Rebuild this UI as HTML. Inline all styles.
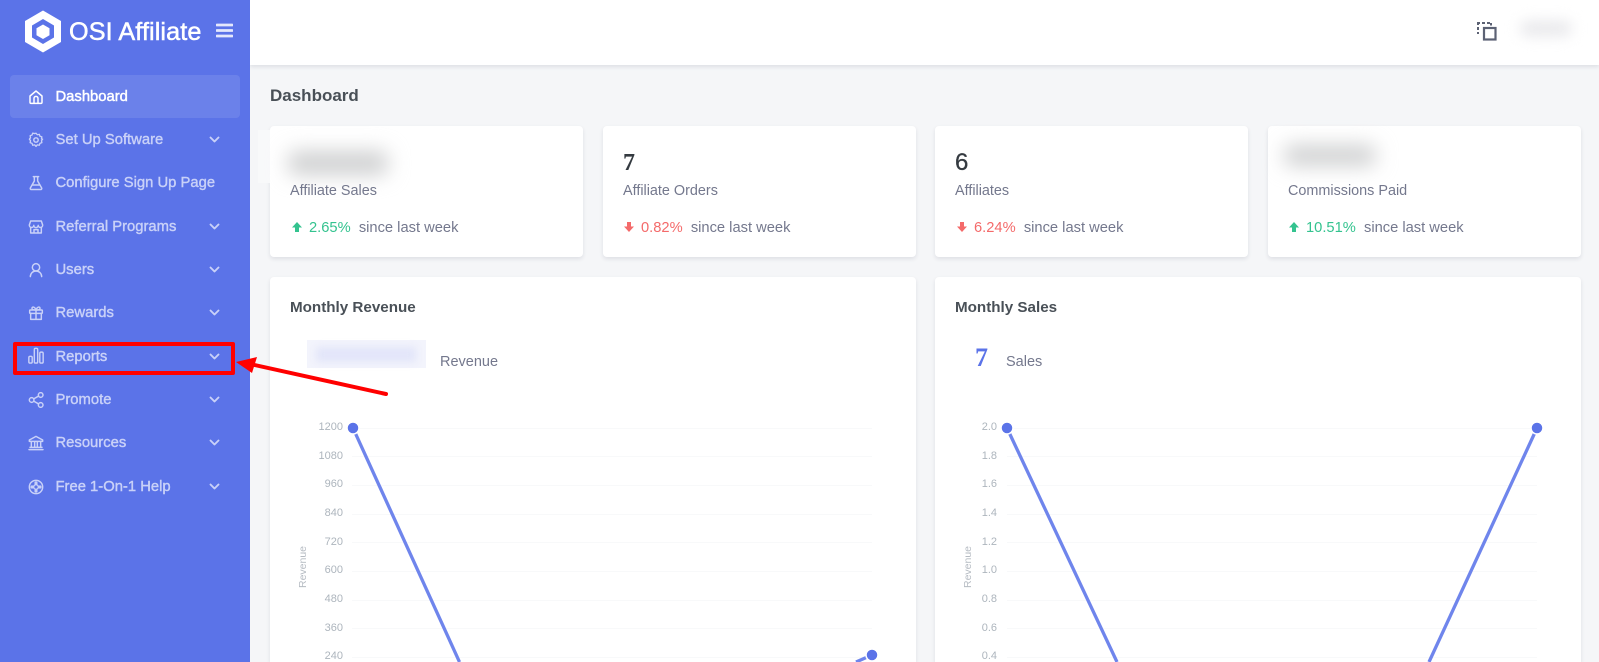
<!DOCTYPE html>
<html lang="en"><head><meta charset="utf-8"><title>OSI Affiliate Dashboard</title>
<style>
*{box-sizing:border-box}
html,body{margin:0;padding:0;width:1599px;height:662px;overflow:hidden;background:#f5f6f8;font-family:"Liberation Sans",sans-serif}
#wrap{position:relative;width:1599px;height:662px;overflow:hidden;background:#f5f6f8}
.a{position:absolute}
#side{left:0;top:0;width:250px;height:662px;background:#5b73e8}
#top{left:250px;top:0;width:1349px;height:65px;background:#fff;box-shadow:0 2px 4px rgba(15,34,58,.1)}
.logo{left:69px;top:18px;font-size:25.2px;line-height:29px;color:#fff;-webkit-text-stroke:.5px #fff;white-space:nowrap;letter-spacing:.1px}
.active{left:10px;top:75px;width:230px;height:43px;border-radius:4px;background:#6b81ea}
.it{left:55.5px;font-size:14.8px;line-height:20px;height:20px;color:#c9d1f8;-webkit-text-stroke:.4px #c9d1f8;white-space:nowrap;margin-top:1px}
.it.on{color:#fff;-webkit-text-stroke:.45px #fff}
.ic{left:28px;width:16px;height:16px;margin-top:1.5px;fill:none;stroke:#c9d1f8;stroke-width:2.2;stroke-linecap:round;stroke-linejoin:round}
.ch{left:209px;width:11px;height:7px;fill:none;stroke:#c9d1f8;stroke-width:1.9;stroke-linecap:round;stroke-linejoin:round}
.card{background:#fff;border-radius:4px;box-shadow:0 2px 4px rgba(15,34,58,.1)}
.card.tall{border-radius:4px 4px 0 0}
.h{color:#495057;font-weight:bold;white-space:nowrap}
.n{font-family:"Liberation Serif",serif;font-weight:bold;font-size:24px;color:#343a40;line-height:28px}
.l{font-size:14.4px;color:#74788d;line-height:18px;white-space:nowrap}
.s{font-size:14.7px;line-height:18px;white-space:nowrap;color:#74788d}
.g{color:#34c38f}.r{color:#f46a6a}
.t{font-size:11px;color:#adb5bd;width:40px;text-align:right;line-height:12px;height:12px}
.rot{font-size:10.5px;color:#b5bbc2;transform:rotate(-90deg);transform-origin:center;width:60px;text-align:center;line-height:12px}
.blur{background:#cfd0d1;filter:blur(10px);border-radius:8px}
</style></head><body>
<div id="wrap">
<div class="a" id="top"></div>
<div class="a" id="side"></div>

<svg class="a" style="left:24px;top:10px" width="38" height="43" viewBox="0 0 38 43"><path d="M19 .5 37 11v21L19 42.500 1 32V11Z" fill="#fff"/><path d="M19 9 30 15.500v12L19 34 8 27.500v-12Z" fill="#5b73e8"/><path d="M19 14.500 25.500 18.300v6.900L19 29 12.500 25.200v-6.900Z" fill="#fff"/></svg>
<div class="a logo">OSI Affiliate</div>
<svg class="a" style="left:216px;top:23px" width="17" height="15" viewBox="0 0 17 15"><path d="M1 2h15M1 7.500h15M1 13h15" stroke="#e4e8fc" stroke-width="2.800" stroke-linecap="round"/></svg>

<div class="a active"></div>
<svg class="a ic" style="top:87px;stroke:#fff" viewBox="0 0 24 24"><path d="M3 10.500 12 3l9 7.500V20a1.500 1.500 0 0 1-1.500 1.500h-15A1.500 1.500 0 0 1 3 20Z"/><path d="M9 21v-7a3 3 0 0 1 6 0v7"/></svg>
<div class="a it on" style="top:86px">Dashboard</div>

<svg class="a ic" style="top:130px" viewBox="0 0 24 24"><circle cx="12" cy="12" r="3.300"/><path d="m12 2 2.200 2.600 3.300-.7 1.100 3.200 3.200 1.100-.7 3.300L23 12l-1.900 2.500.7 3.300-3.200 1.100-1.100 3.200-3.300-.7L12 24l-2.200-2.600-3.300.7-1.100-3.200-3.200-1.100.7-3.300L1 12l1.900-2.500-.7-3.300 3.200-1.100 1.100-3.200 3.300.7Z" transform="translate(1.200 0) scale(.9)"/></svg>
<div class="a it" style="top:129px">Set Up Software</div>
<svg class="a ch" style="top:136px" viewBox="0 0 11 7"><path d="m1.500 1.500 4 4 4-4"/></svg>

<svg class="a ic" style="top:173px" viewBox="0 0 24 24"><path d="M8 2.500h8M9.500 2.500v6.500L3.500 19.500A1.500 1.500 0 0 0 5 21.700h14a1.500 1.500 0 0 0 1.500-2.200L14.500 9V2.500"/><path d="M6.500 15h11"/></svg>
<div class="a it" style="top:172px">Configure Sign Up Page</div>

<svg class="a ic" style="top:217px" viewBox="0 0 24 24"><path d="M4 3h16l2 6a3.300 3.300 0 0 1-6.700.6 3.300 3.300 0 0 1-6.600 0A3.300 3.300 0 0 1 2 9Z"/><path d="M4 12.500V21h16v-8.500M9 21v-5h6v5"/></svg>
<div class="a it" style="top:216px">Referral Programs</div>
<svg class="a ch" style="top:223px" viewBox="0 0 11 7"><path d="m1.500 1.500 4 4 4-4"/></svg>

<svg class="a ic" style="top:260px" viewBox="0 0 24 24"><circle cx="12" cy="8" r="5.500"/><path d="M3.500 22a8.500 8.500 0 0 1 17 0"/></svg>
<div class="a it" style="top:259px">Users</div>
<svg class="a ch" style="top:266px" viewBox="0 0 11 7"><path d="m1.500 1.500 4 4 4-4"/></svg>

<svg class="a ic" style="top:303px" viewBox="0 0 24 24"><rect x="2.500" y="7.500" width="19" height="5" rx="1"/><path d="M4 12.500V21.500h16v-9M12 7.500v14M12 7.500C10 2 5.500 2 6 5.500c.2 1.300 3 2 6 2ZM12 7.500C14 2 18.500 2 18 5.500c-.2 1.300-3 2-6 2Z"/></svg>
<div class="a it" style="top:302px">Rewards</div>
<svg class="a ch" style="top:309px" viewBox="0 0 11 7"><path d="m1.500 1.500 4 4 4-4"/></svg>

<svg class="a ic" style="top:347px;margin:0;stroke-width:1.700;height:17px" viewBox="0 0 19 20"><rect x="1" y="11" width="4" height="8" rx="1.500"/><rect x="7.500" y="1.500" width="4" height="17.500" rx="1.500"/><rect x="14" y="6" width="4" height="13" rx="1.500"/></svg>
<div class="a it" style="top:346px">Reports</div>
<svg class="a ch" style="top:353px" viewBox="0 0 11 7"><path d="m1.500 1.500 4 4 4-4"/></svg>

<svg class="a ic" style="top:390px" viewBox="0 0 24 24"><circle cx="5.500" cy="12" r="3.500"/><circle cx="19" cy="4.500" r="3.500"/><circle cx="19" cy="19.500" r="3.500"/><path d="m8.500 10.300 7.500-4.200M8.500 13.700l7.500 4.200"/></svg>
<div class="a it" style="top:389px">Promote</div>
<svg class="a ch" style="top:396px" viewBox="0 0 11 7"><path d="m1.500 1.500 4 4 4-4"/></svg>

<svg class="a ic" style="top:433px" viewBox="0 0 24 24"><path d="M12 2 2 7.500v2h20v-2ZM5 9.500V18M10 9.500V18M14 9.500V18M19 9.500V18M3 18.500h18M1.500 22h21"/></svg>
<div class="a it" style="top:432px">Resources</div>
<svg class="a ch" style="top:439px" viewBox="0 0 11 7"><path d="m1.500 1.500 4 4 4-4"/></svg>

<svg class="a ic" style="top:477px" viewBox="0 0 24 24"><circle cx="12" cy="12" r="10"/><circle cx="12" cy="12" r="3.500"/><circle cx="12" cy="6" r="1.300"/><circle cx="12" cy="18" r="1.300"/><circle cx="6" cy="12" r="1.300"/><circle cx="18" cy="12" r="1.300"/></svg>
<div class="a it" style="top:476px">Free 1-On-1 Help</div>
<svg class="a ch" style="top:483px" viewBox="0 0 11 7"><path d="m1.500 1.500 4 4 4-4"/></svg>

<!-- header right -->
<svg class="a" style="left:1476px;top:21px" width="22" height="20" viewBox="0 0 22 20" fill="none"><rect x="8" y="7" width="11.500" height="11.500" stroke="#5c6274" stroke-width="2.200"/><path d="M1 2h3M6 2h3M11 2h3M2 1v3M2 6v3M2 11v2M15 2v2.500" stroke="#5c6274" stroke-width="2"/></svg>
<div class="a blur" style="left:1520px;top:21px;width:52px;height:15px;background:#e8e8eb;filter:blur(7px)"></div>

<div class="a h" style="left:270px;top:86px;font-size:17px;line-height:20px">Dashboard</div>

<!-- stat cards -->
<div class="a card" style="left:270px;top:126px;width:313px;height:131px"></div>
<div class="a card" style="left:603px;top:126px;width:313px;height:131px"></div>
<div class="a card" style="left:935px;top:126px;width:313px;height:131px"></div>
<div class="a card" style="left:1268px;top:126px;width:313px;height:131px"></div>

<div class="a" style="left:258px;top:130px;width:12px;height:53px;background:#f8f9fa"></div>
<div class="a blur" style="left:288px;top:151px;width:100px;height:24px"></div>
<div class="a blur" style="left:1284px;top:145px;width:92px;height:21px"></div>

<div class="a n" style="left:623px;top:149px">7</div>
<div class="a n" style="left:955px;top:149px;font-family:'Liberation Sans',sans-serif;font-weight:normal;-webkit-text-stroke:.3px #343a40">6</div>

<div class="a l" style="left:290px;top:181.500px">Affiliate Sales</div>
<div class="a l" style="left:623px;top:181.500px">Affiliate Orders</div>
<div class="a l" style="left:955px;top:181.500px">Affiliates</div>
<div class="a l" style="left:1288px;top:181.500px">Commissions Paid</div>

<svg class="a" style="left:291px;top:221px" width="12" height="12" viewBox="0 0 12 12"><path d="M6 1 11 6.500H8V11H4V6.500H1Z" fill="#34c38f"/></svg>
<div class="a s" style="left:309px;top:219px"><span class="g">2.65%</span>&nbsp; since last week</div>
<svg class="a" style="left:623px;top:221px" width="12" height="12" viewBox="0 0 12 12"><path d="M6 11 11 5.500H8V1H4V5.500H1Z" fill="#f46a6a"/></svg>
<div class="a s" style="left:641px;top:219px"><span class="r">0.82%</span>&nbsp; since last week</div>
<svg class="a" style="left:956px;top:221px" width="12" height="12" viewBox="0 0 12 12"><path d="M6 11 11 5.500H8V1H4V5.500H1Z" fill="#f46a6a"/></svg>
<div class="a s" style="left:974px;top:219px"><span class="r">6.24%</span>&nbsp; since last week</div>
<svg class="a" style="left:1288px;top:221px" width="12" height="12" viewBox="0 0 12 12"><path d="M6 1 11 6.500H8V11H4V6.500H1Z" fill="#34c38f"/></svg>
<div class="a s" style="left:1306px;top:219px"><span class="g">10.51%</span>&nbsp; since last week</div>

<!-- chart cards -->
<div class="a card tall" style="left:270px;top:277px;width:646px;height:385px"></div>
<div class="a card tall" style="left:935px;top:277px;width:646px;height:385px"></div>

<div class="a h" style="left:290px;top:298px;font-size:15.200px;line-height:20px">Monthly Revenue</div>
<div class="a h" style="left:955px;top:298px;font-size:15.200px;line-height:20px">Monthly Sales</div>

<div class="a" style="left:307px;top:340px;width:119px;height:28px;background:#f3f4fc"></div>
<div class="a" style="left:316px;top:347px;width:100px;height:15px;background:#e2e5f9;filter:blur(4px)"></div>
<div class="a l" style="left:440px;top:353px;font-size:14.500px">Revenue</div>
<div class="a" style="left:975px;top:342px;font-family:'Liberation Serif',serif;font-weight:bold;font-size:26px;line-height:32px;color:#5b73e8">7</div>
<div class="a l" style="left:1006px;top:353px;font-size:14.500px">Sales</div>

<!-- charts -->
<svg class="a" style="left:0;top:0" width="1599" height="662" viewBox="0 0 1599 662" fill="none">
<g stroke="#f8f9fa" stroke-width="1">
<path d="M352 428.500H872M352 456.500H872M352 485.500H872M352 514.500H872M352 542.500H872M352 571.500H872M352 600.500H872M352 628.500H872M352 657.500H872"/>
<path d="M1007 428.500H1537M1007 456.500H1537M1007 485.500H1537M1007 514.500H1537M1007 542.500H1537M1007 571.500H1537M1007 600.500H1537M1007 628.500H1537M1007 657.500H1537"/>
</g>
<g stroke="#6f85ec" stroke-width="3.300">
<path d="M353 428 459.500 662"/>
<path d="M856 662 872 655"/>
<path d="M1007 428 1117 662"/>
<path d="M1429 662 1537 428"/>
</g>
<g fill="#5b73e8" stroke="#fff" stroke-width="1.500">
<circle cx="353" cy="428" r="6"/><circle cx="872" cy="655" r="6"/><circle cx="1007" cy="428" r="6"/><circle cx="1537" cy="428" r="6"/>
</g>
</svg>

<div class="a t" style="left:303px;top:420.500px">1200</div>
<div class="a t" style="left:303px;top:449.500px">1080</div>
<div class="a t" style="left:303px;top:477.500px">960</div>
<div class="a t" style="left:303px;top:506.500px">840</div>
<div class="a t" style="left:303px;top:535.500px">720</div>
<div class="a t" style="left:303px;top:563.500px">600</div>
<div class="a t" style="left:303px;top:592.500px">480</div>
<div class="a t" style="left:303px;top:621.500px">360</div>
<div class="a t" style="left:303px;top:649.500px">240</div>

<div class="a t" style="left:957px;top:420.500px">2.0</div>
<div class="a t" style="left:957px;top:449.500px">1.8</div>
<div class="a t" style="left:957px;top:477.500px">1.6</div>
<div class="a t" style="left:957px;top:506.500px">1.4</div>
<div class="a t" style="left:957px;top:535.500px">1.2</div>
<div class="a t" style="left:957px;top:563.500px">1.0</div>
<div class="a t" style="left:957px;top:592.500px">0.8</div>
<div class="a t" style="left:957px;top:621.500px">0.6</div>
<div class="a t" style="left:957px;top:649.500px">0.4</div>

<div class="a rot" style="left:273px;top:561px">Revenue</div>
<div class="a rot" style="left:938px;top:561px">Revenue</div>

<!-- annotation -->
<div class="a" style="left:13px;top:342px;width:222px;height:33px;border:4px solid #f00;border-radius:2px"></div>
<svg class="a" style="left:0;top:0" width="1599" height="662" viewBox="0 0 1599 662"><path d="M386 394 250 364" stroke="#f00" stroke-width="4" stroke-linecap="round"/><path d="M236 362 257 357 252 373Z" fill="#f00"/></svg>
</div>
</body></html>
